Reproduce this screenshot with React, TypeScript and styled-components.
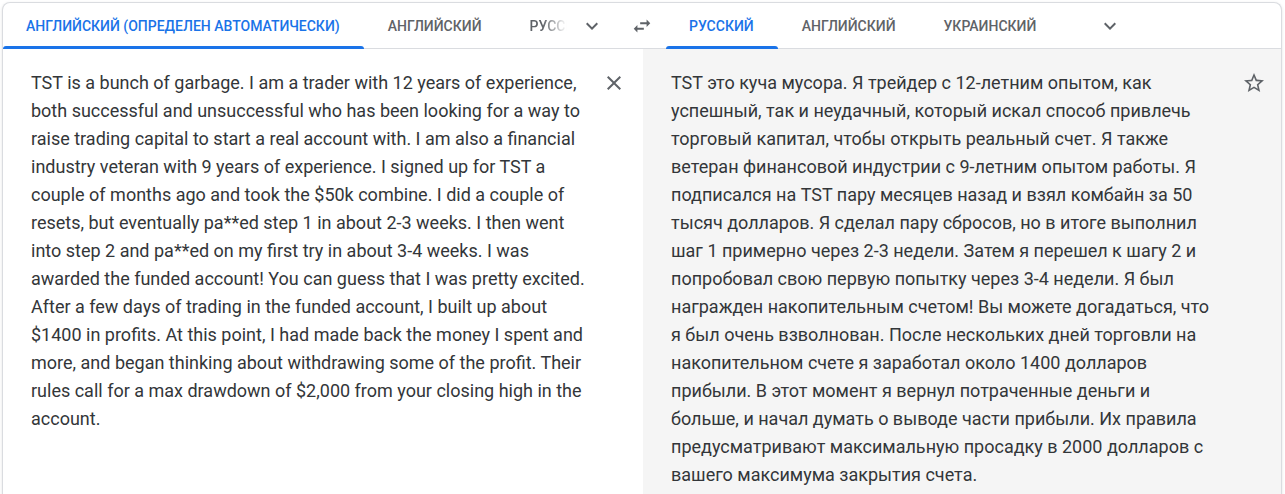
import styled, { createGlobalStyle } from "styled-components";

const GlobalStyle = createGlobalStyle`
  html, body {
    margin: 0;
    padding: 0;
    background: #fff;
    overflow: hidden;
  }
  body {
    font-family: Roboto, "Liberation Sans", Arial, sans-serif;
  }
`;

const Page = styled.div`
  padding: 2px 3px 0 2px;
`;

const Card = styled.div`
  border: 1px solid #dadce0;
  border-bottom: none;
  border-radius: 8px 8px 0 0;
  box-shadow: 0 1px 3px rgba(60, 64, 67, 0.15);
  overflow: hidden;
  background: #fff;
`;

const Header = styled.div`
  display: grid;
  grid-template-columns: 1fr 48px 1fr;
  height: 45px;
  border-bottom: 1px solid #dadce0;
`;

const LangBar = styled.div`
  display: flex;
  align-items: stretch;
  min-width: 0;
`;

const Tab = styled.div<{ $active?: boolean; $fade?: boolean }>`
  position: relative;
  display: flex;
  align-items: center;
  padding: 0 24px 0 24px;
  font-size: 14px;
  font-weight: 500;
  white-space: nowrap;
  color: ${(p) => (p.$active ? "#1a73e8" : "#5f6368")};
  ${(p) =>
    p.$fade &&
    `
    flex: 1;
    min-width: 0;
    overflow: hidden;
    padding-right: 0;
    -webkit-mask-image: linear-gradient(to right, #000 55%, transparent 92%);
    mask-image: linear-gradient(to right, #000 55%, transparent 92%);
  `}

  &:first-child {
    padding-left: 23px;
  }

  &::after {
    content: "";
    display: ${(p) => (p.$active ? "block" : "none")};
    position: absolute;
    left: 0;
    right: 0;
    bottom: -1px;
    height: 3px;
    border-radius: 3px 3px 0 0;
    background: #1a73e8;
  }
`;

const IconButton = styled.div<{ $offset?: number; $trail?: number }>`
  display: flex;
  align-items: center;
  justify-content: center;
  width: 40px;
  flex: none;
  margin-left: ${(p) => p.$offset ?? 0}px;
  margin-right: ${(p) => p.$trail ?? 0}px;
  color: #5f6368;

  svg {
    width: 24px;
    height: 24px;
    fill: currentColor;
  }
`;

const SwapCell = styled(IconButton)`
  width: auto;
  svg {
    width: 22px;
    height: 22px;
  }
`;

const Body = styled.div`
  display: grid;
  grid-template-columns: 640px 1fr;
  min-height: 520px;
`;

const Panel = styled.div<{ $shaded?: boolean }>`
  display: flex;
  align-items: flex-start;
  padding: 20px 0 0 28px;
  background: ${(p) => (p.$shaded ? "#f5f5f5" : "#fff")};
`;

const Text = styled.div<{ $width: number }>`
  width: ${(p) => p.$width}px;
  font-size: 18px;
  line-height: 28px;
  color: #333639;
`;

const PanelIcon = styled.div<{ $gap: number }>`
  margin-left: ${(p) => p.$gap}px;
  margin-top: 2px;
  color: #5f6368;

  svg {
    display: block;
    width: 24px;
    height: 24px;
    fill: currentColor;
  }
`;

const ChevronIcon = () => (
  <svg viewBox="0 0 24 24">
    <path d="M16.59 8.59L12 13.17 7.41 8.59 6 10l6 6 6-6z" />
  </svg>
);

const SwapIcon = () => (
  <svg viewBox="0 0 24 24">
    <path d="M6.99 11L3 15l3.99 4v-3H14v-2H6.99v-3zM21 9l-3.99-4v3H10v2h7.01v3L21 9z" />
  </svg>
);

const CloseIcon = () => (
  <svg viewBox="0 0 24 24">
    <path d="M19 6.41L17.59 5 12 10.59 6.41 5 5 6.41 10.59 12 5 17.59 6.41 19 12 13.41 17.59 19 19 17.59 13.41 12z" />
  </svg>
);

const StarIcon = () => (
  <svg viewBox="0 0 24 24">
    <path d="M22 9.24l-7.19-.62L12 2 9.19 8.63 2 9.24l5.46 4.73L5.82 21 12 17.27 18.18 21l-1.63-7.03L22 9.24zM12 15.4l-3.76 2.27 1-4.28-3.32-2.88 4.38-.38L12 6.1l1.71 4.04 4.38.38-3.32 2.88 1 4.28L12 15.4z" />
  </svg>
);

const source =
  "TST is a bunch of garbage. I am a trader with 12 years of experience, both successful and unsuccessful who has been looking for a way to raise trading capital to start a real account with. I am also a financial industry veteran with 9 years of experience. I signed up for TST a couple of months ago and took the $50k combine. I did a couple of resets, but eventually pa**ed step 1 in about 2-3 weeks. I then went into step 2 and pa**ed on my first try in about 3-4 weeks. I was awarded the funded account! You can guess that I was pretty excited. After a few days of trading in the funded account, I built up about $1400 in profits. At this point, I had made back the money I spent and more, and began thinking about withdrawing some of the profit. Their rules call for a max drawdown of $2,000 from your closing high in the account.";

const translation =
  "TST это куча мусора. Я трейдер с 12-летним опытом, как успешный, так и неудачный, который искал способ привлечь торговый капитал, чтобы открыть реальный счет. Я также ветеран финансовой индустрии с 9-летним опытом работы. Я подписался на TST пару месяцев назад и взял комбайн за 50 тысяч долларов. Я сделал пару сбросов, но в итоге выполнил шаг 1 примерно через 2-3 недели. Затем я перешел к шагу 2 и попробовал свою первую попытку через 3-4 недели. Я был награжден накопительным счетом! Вы можете догадаться, что я был очень взволнован. После нескольких дней торговли на накопительном счете я заработал около 1400 долларов прибыли. В этот момент я вернул потраченные деньги и больше, и начал думать о выводе части прибыли. Их правила предусматривают максимальную просадку в 2000 долларов с вашего максимума закрытия счета.";

export default function App() {
  return (
    <Page>
      <GlobalStyle />
      <Card>
        <Header>
          <LangBar>
            <Tab $active>АНГЛИЙСКИЙ (ОПРЕДЕЛЕН АВТОМАТИЧЕСКИ)</Tab>
            <Tab>АНГЛИЙСКИЙ</Tab>
            <Tab $fade>РУССКИЙ</Tab>
            <IconButton $trail={6}>
              <ChevronIcon />
            </IconButton>
          </LangBar>
          <SwapCell>
            <SwapIcon />
          </SwapCell>
          <LangBar>
            <Tab $active>РУССКИЙ</Tab>
            <Tab>АНГЛИЙСКИЙ</Tab>
            <Tab>УКРАИНСКИЙ</Tab>
            <IconButton $offset={30}>
              <ChevronIcon />
            </IconButton>
          </LangBar>
        </Header>
        <Body>
          <Panel>
            <Text $width={558}>{source}</Text>
            <PanelIcon $gap={13}>
              <CloseIcon />
            </PanelIcon>
          </Panel>
          <Panel $shaded>
            <Text $width={545}>{translation}</Text>
            <PanelIcon $gap={26}>
              <StarIcon />
            </PanelIcon>
          </Panel>
        </Body>
      </Card>
    </Page>
  );
}
